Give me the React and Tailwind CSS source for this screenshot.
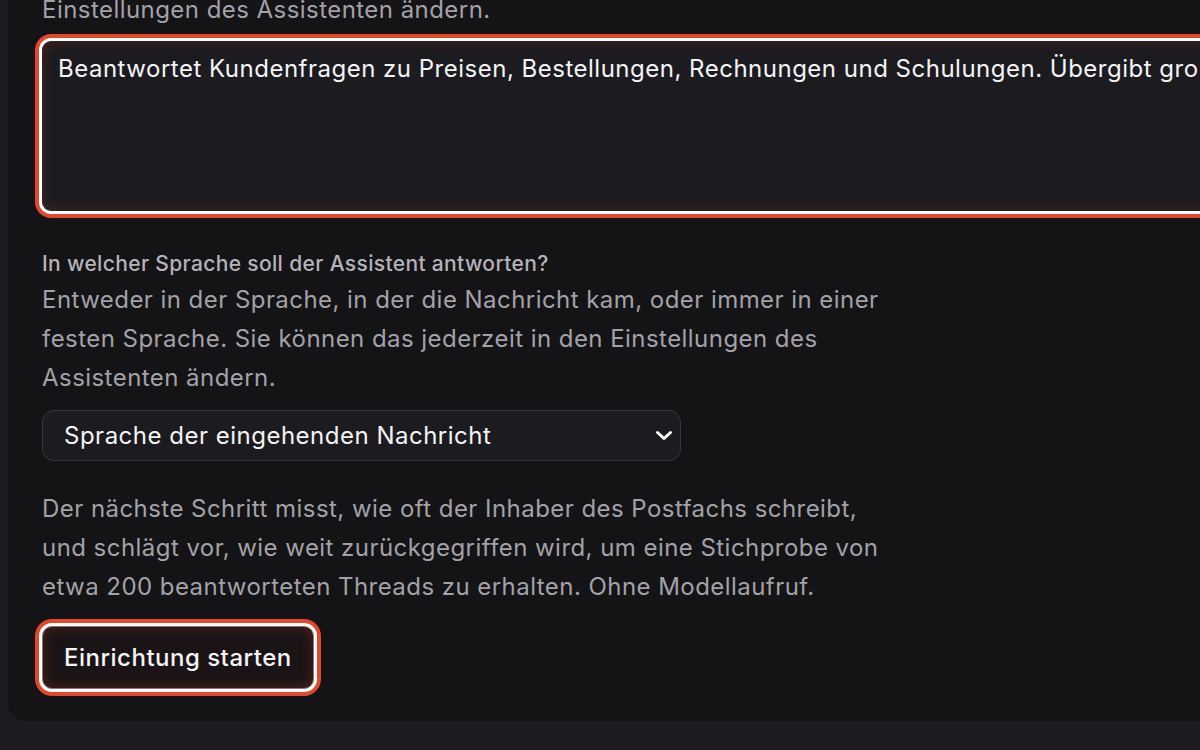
import { useState } from 'react';

const ChevronDown = () => (
  <svg width="18" height="11" viewBox="0 0 18 11" fill="none" className="shrink-0">
    <path d="M2.5 2.5l6.5 6 6.5-6" stroke="#ffffff" strokeWidth="3" strokeLinecap="round" strokeLinejoin="round" />
  </svg>
);

const SetupPage = () => {
  const [purpose, setPurpose] = useState(
    'Beantwortet Kundenfragen zu Preisen, Bestellungen, Rechnungen und Schulungen. Übergibt großvolumige Anfragen an das Team.'
  );

  return (
    <div className="h-[750px] w-[1200px] overflow-hidden bg-[#1c1b1f] font-['Inter',sans-serif]">
      <div className="ml-2 w-[1800px] rounded-b-[18px] bg-[#141316] pb-[32px] pl-[34px]">
        <p className="-mt-[10px] text-[24px] leading-[39px] tracking-[0.45px] text-[#a3a2a8]">
          Einstellungen des Assistenten ändern.
        </p>

        <textarea
          value={purpose}
          onChange={(e) => setPurpose(e.target.value)}
          className="mt-[12px] block h-[170px] w-[1700px] resize-none rounded-[9px] bg-[#1c1b20] px-4 pt-[12px] text-[24px] leading-[32px] tracking-[0.5px] text-[#f4f4f5] outline-none shadow-[0_0_0_3px_#ffffff,0_0_0_7px_#e2482c,inset_0_0_14px_rgba(226,72,44,0.22)]"
        />

        <div className="mt-[39px] max-w-[840px]">
          <label className="block text-[21px] font-medium leading-[28px] tracking-[0.35px] text-[#b4b3b9]">
            In welcher Sprache soll der Assistent antworten?
          </label>
          <p className="mt-[2px] text-[24px] leading-[39px] tracking-[0.45px] text-[#a3a2a8]">
            Entweder in der Sprache, in der die Nachricht kam, oder immer in einer festen Sprache. Sie können das jederzeit in den Einstellungen des Assistenten ändern.
          </p>
        </div>

        <div className="mt-[13px] flex h-[51px] w-[639px] items-center justify-between rounded-[12px] border border-[#37363c] bg-[#1c1b1f] pl-[21px] pr-[7px] text-[24px] tracking-[0.5px] text-[#f4f4f5]">
          <span>Sprache der eingehenden Nachricht</span>
          <ChevronDown />
        </div>

        <p className="mt-[28px] max-w-[840px] text-[24px] leading-[39px] tracking-[0.45px] text-[#a3a2a8]">
          Der nächste Schritt misst, wie oft der Inhaber des Postfachs schreibt, und schlägt vor, wie weit zurückgegriffen wird, um eine Stichprobe von etwa 200 beantworteten Threads zu erhalten. Ohne Modellaufruf.
        </p>

        <button className="mt-[20px] h-[63px] rounded-[10px] border border-[#8c7473] bg-[#1a1416] px-[21px] text-[24px] font-medium tracking-[0.5px] text-[#f4f4f5] shadow-[0_0_0_3px_#ffffff,0_0_0_7px_#e2482c,inset_0_0_14px_rgba(226,72,44,0.25)]">
          Einrichtung starten
        </button>
      </div>
    </div>
  );
};

export default function App() {
  return <SetupPage />;
}
